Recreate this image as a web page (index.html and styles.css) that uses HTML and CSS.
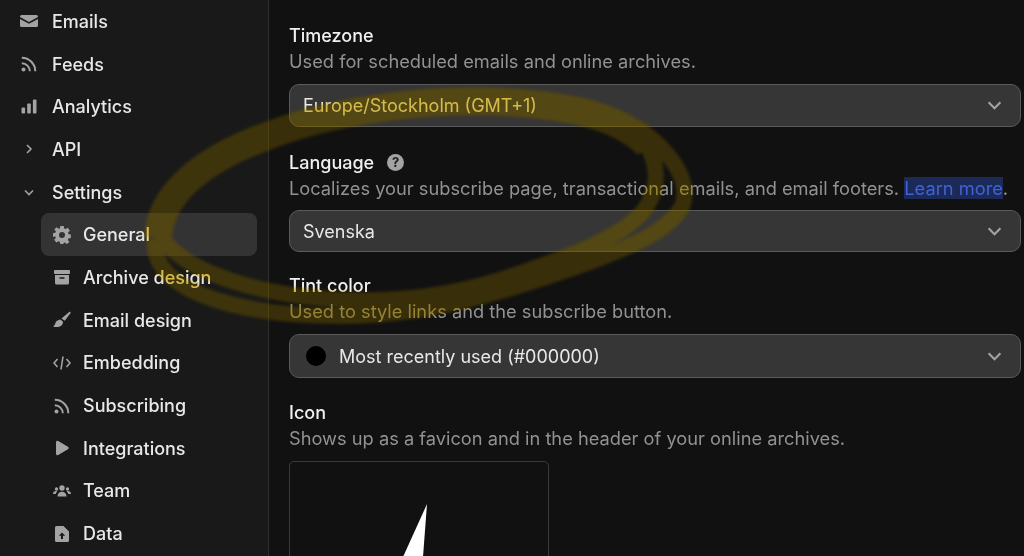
FILE: index.html
```html
<!DOCTYPE html>
<html lang="en">
<head>
    <meta charset="UTF-8">
    <meta name="viewport" content="width=device-width, initial-scale=1.0">
    <title>Settings - General</title>
    <link rel="stylesheet" href="styles.css">
</head>
<body>

    <div class="page">
        <!-- Sidebar -->
        <aside class="sidebar">
            <a class="nav-item">
                <svg class="nav-icon" viewBox="0 0 18 18"><path d="M1.500 3h15A1.500 1.500 0 0 1 18 4.500v.6L9 10 0 5.100V4.500A1.500 1.500 0 0 1 1.500 3z"/><path d="M0 7l9 4.800L18 7v6.500A1.500 1.500 0 0 1 16.500 15h-15A1.500 1.500 0 0 1 0 13.500z"/></svg>
                Emails
            </a>
            <a class="nav-item">
                <svg class="nav-icon" viewBox="0 0 18 18"><circle cx="3.500" cy="14.500" r="2"/><path class="rss-arc" d="M1.800 8.300a8 8 0 0 1 8 8M1.800 2.800a13.500 13.500 0 0 1 13.500 13.500"/></svg>
                Feeds
            </a>
            <a class="nav-item">
                <svg class="nav-icon" viewBox="0 0 18 18"><rect x="1.500" y="9.500" width="3.600" height="6" rx="1"/><rect x="7.200" y="5.500" width="3.600" height="10" rx="1"/><rect x="12.900" y="1.500" width="3.600" height="14" rx="1"/></svg>
                Analytics
            </a>
            <a class="nav-item">
                <svg class="nav-icon nav-chevron" viewBox="0 0 18 18"><path d="M7 5l4 4-4 4"/></svg>
                API
            </a>
            <a class="nav-item">
                <svg class="nav-icon nav-chevron" viewBox="0 0 18 18"><path d="M5 7.500l4 4 4-4"/></svg>
                Settings
            </a>

            <div class="subnav">
                <a class="nav-item active">
                    <svg class="nav-icon" viewBox="0 0 18 18"><path fill-rule="evenodd" d="M7.300 0h3.400l.5 2.500 1.300.6L14.800 1.700l2.100 3.100-1.800 1.800.2 1.400 2.500.6v3.400l-2.500.6-.4 1.300 1.500 2.200-2.600 2-1.900-1.700-1.200.5-.5 1.300H7.300l-.5-2.500-1.300-.5-2.200 1.400-2.100-2.800 1.600-1.900-.4-1.300L0 10.700V7.300l2.400-.6.500-1.300L1.300 3.200 3.800 1.300l1.800 1.500 1.200-.4zM9 6a3 3 0 1 0 0 6 3 3 0 0 0 0-6z"/></svg>
                    General
                </a>
                <a class="nav-item">
                    <svg class="nav-icon" viewBox="0 0 18 18"><rect x="1" y="2" width="16" height="4" rx="1"/><path fill-rule="evenodd" d="M2 7h14v8a1.500 1.500 0 0 1-1.500 1.500h-11A1.500 1.500 0 0 1 2 15zm4.500 2.200v1.500h5V9.200z"/></svg>
                    Archive design
                </a>
                <a class="nav-item">
                    <svg class="nav-icon" viewBox="0 0 18 18"><path d="M16.200 1c.9-.5 1.700.4 1.200 1.200L11.800 9.800 8.500 7.500z"/><path d="M7.400 8.500l2.700 2.200C9.900 14 7.200 16 4 16H1.200c-.7 0-1-.7-.5-1.200 1.200-.7 1.500-1.600 1.700-2.800.3-1.800 2.500-3.300 5-3.500z"/></svg>
                    Email design
                </a>
                <a class="nav-item">
                    <svg class="nav-icon nav-code" viewBox="0 0 18 18"><path d="M4.500 5L1 9l3.500 4M13.500 5L17 9l-3.500 4M10 2.500L8 15.500"/></svg>
                    Embedding
                </a>
                <a class="nav-item">
                    <svg class="nav-icon" viewBox="0 0 18 18"><circle cx="3.500" cy="14.500" r="2"/><path class="rss-arc" d="M1.800 8.300a8 8 0 0 1 8 8M1.800 2.800a13.500 13.500 0 0 1 13.500 13.500"/></svg>
                    Subscribing
                </a>
                <a class="nav-item">
                    <svg class="nav-icon" viewBox="0 0 18 18"><path d="M3 3.200C3 2 4.200 1.300 5.200 1.900l9.700 5.800c1 .6 1 2 0 2.600l-9.700 5.800C4.200 16.700 3 16 3 14.800z"/></svg>
                    Integrations
                </a>
                <a class="nav-item">
                    <svg class="nav-icon" viewBox="0 0 18 18"><circle cx="9" cy="6" r="2.700"/><circle cx="3.500" cy="7" r="1.700"/><circle cx="14.500" cy="7" r="1.700"/><path d="M4.500 14.500c0-3 2-4.800 4.500-4.800s4.500 1.800 4.500 4.800z"/><path d="M0 12c0-1.700 1.200-3 2.800-3 .6 0 1 .1 1.400.4-.8.800-1.300 1.600-1.500 2.600zM18 12c0-1.700-1.200-3-2.800-3-.6 0-1 .1-1.400.4.800.8 1.300 1.600 1.500 2.600z"/></svg>
                    Team
                </a>
                <a class="nav-item">
                    <svg class="nav-icon" viewBox="0 0 18 18"><path fill-rule="evenodd" d="M3.500 1H10.500L16 6.500v9A1.500 1.500 0 0 1 14.500 17h-11A1.500 1.500 0 0 1 2 15.500v-13A1.500 1.500 0 0 1 3.500 1zM9 7.500L5.800 10.700h2.200V14h2v-3.300h2.200z"/></svg>
                    Data
                </a>
            </div>
        </aside>

        <!-- Settings form -->
        <main class="content">
            <section class="field">
                <h3>Timezone</h3>
                <p>Used for scheduled emails and online archives.</p>
                <div class="select">
                    <span>Europe/Stockholm (GMT+1)</span>
                    <svg class="select-arrow" viewBox="0 0 14 14"><path d="M1.500 4l5.500 5.500L12.500 4"/></svg>
                </div>
            </section>

            <section class="field field-language">
                <h3>Language <span class="help">?</span></h3>
                <p>Localizes your subscribe page, transactional emails, and email footers. <a class="learn-more">Learn more</a>.</p>
                <div class="select">
                    <span>Svenska</span>
                    <svg class="select-arrow" viewBox="0 0 14 14"><path d="M1.500 4l5.500 5.500L12.500 4"/></svg>
                </div>
            </section>

            <section class="field field-tint">
                <h3>Tint color</h3>
                <p>Used to style links and the subscribe button.</p>
                <div class="select">
                    <span class="swatch-row"><i class="swatch"></i>Most recently used (#000000)</span>
                    <svg class="select-arrow" viewBox="0 0 14 14"><path d="M1.500 4l5.500 5.500L12.500 4"/></svg>
                </div>
            </section>

            <section class="field">
                <h3>Icon</h3>
                <p>Shows up as a favicon and in the header of your online archives.</p>
                <div class="icon-box">
                    <svg class="icon-art" viewBox="0 0 258 95"><path d="M137 42L113 95H133z"/></svg>
                </div>
            </section>
        </main>
    </div>

    <!-- Hand drawn marker ring over the page -->
    <svg class="scribble" viewBox="0 0 1024 556">
        <defs>
            <g id="ring">
                <path class="band-top" d="M648 145C620 118 580 108 520 103 440 97 340 108 270 135 200 160 160 195 158 238"/>
                <path class="band-low" d="M640 135C660 160 662 190 640 215 610 245 550 263 497 281 450 295 400 302 350 300 270 298 185 275 160 235"/>
                <path class="band-low" d="M635 126C670 150 692 180 682 207 665 235 620 250 590 262 555 274 530 283 497 292 450 306 400 316 340 316 250 316 150 295 155 240"/>
            </g>
        </defs>
        <use class="ink-multiply" href="#ring"/>
        <use class="ink-normal" href="#ring"/>
    </svg>

</body>
</html>
```

FILE: styles.css
```css
body {
    font-family: Inter, "Liberation Sans", sans-serif;
    margin: 0;
    background-color: #111111;
    color: #efefef;
    overflow: hidden;
}

.page {
    display: flex;
    height: 556px;
    overflow: hidden;
}

/* Sidebar */
.sidebar {
    width: 269px;
    box-sizing: border-box;
    flex-shrink: 0;
    background-color: #191919;
    border-right: 1px solid #2e2e2e;
    padding-left: 20px;
    padding-right: 11px;
}

.nav-item {
    display: flex;
    align-items: center;
    gap: 14px;
    height: 42.700px;
    font-size: 18px;
    font-weight: 500;
    color: #e8e8e8;
}

.nav-icon {
    width: 18px;
    height: 18px;
    flex-shrink: 0;
    fill: #a3a3a3;
}

.nav-chevron,
.nav-code {
    fill: none;
    stroke: #a3a3a3;
    stroke-width: 1.600;
}

.rss-arc {
    fill: none;
    stroke: #a3a3a3;
    stroke-width: 2;
}

.subnav {
    margin-left: 21px;
}

.subnav .nav-item {
    padding-left: 12px;
    gap: 12px;
    border-radius: 8px;
}

.nav-item.active {
    background-color: #333333;
}

/* Form */
.content {
    flex: 1;
    padding: 21px 3px 0 20px;
    min-width: 0;
}

.field {
    margin-bottom: 21px;
}

.field-language {
    margin-bottom: 19px;
}

.field-language p {
    margin-bottom: 9px;
}

.field-language .select {
    height: 42px;
}

.field-tint {
    margin-bottom: 20px;
}

.field-tint .select {
    height: 44px;
}

.field h3 {
    display: flex;
    align-items: center;
    gap: 13px;
    margin: 0;
    height: 28px;
    font-size: 18px;
    font-weight: 500;
    color: #f0f0f0;
}

.field p {
    margin: 0 0 10px 0;
    height: 25px;
    line-height: 25px;
    font-size: 18.250px;
    color: #929292;
    white-space: nowrap;
}

.field-language p {
    margin-bottom: 9px;
}

.help {
    width: 17px;
    height: 17px;
    border-radius: 50%;
    background-color: #a3a3a3;
    color: #1a1a1a;
    font-size: 13px;
    font-weight: 700;
    text-align: center;
    line-height: 17px;
}

.learn-more {
    color: #3f63d6;
    background-color: #1b2a57;
}

.select {
    display: flex;
    align-items: center;
    justify-content: space-between;
    box-sizing: border-box;
    height: 43px;
    padding: 0 18px 0 13px;
    background-color: #363636;
    border: 1px solid #5a5a5a;
    border-radius: 10px;
    font-size: 18px;
    color: #e8e8e8;
}

.select-arrow {
    width: 15px;
    height: 15px;
    fill: none;
    stroke: #a3a3a3;
    stroke-width: 2;
}

.swatch-row {
    display: flex;
    align-items: center;
    gap: 13px;
}

.swatch {
    width: 20px;
    height: 20px;
    margin-left: 3px;
    border-radius: 50%;
    background-color: #000000;
}

.icon-box {
    width: 260px;
    height: 140px;
    box-sizing: border-box;
    border: 1px solid #3a3a3a;
    border-radius: 5px;
}

.icon-art {
    display: block;
    width: 258px;
    height: 95px;
    fill: #ffffff;
}

/* Marker ring */
.scribble {
    position: absolute;
    top: 0;
    left: 0;
    width: 1024px;
    height: 556px;
    pointer-events: none;
}

.scribble path {
    fill: none;
}

.band-top {
    stroke-width: 28;
}

.band-low {
    stroke-width: 16;
}

.ink-multiply {
    stroke: #fbe46c;
    mix-blend-mode: multiply;
    filter: blur(1.500px);
}

.ink-normal {
    stroke: #a8860f;
    opacity: 0.26;
    filter: blur(1.500px);
}
```
